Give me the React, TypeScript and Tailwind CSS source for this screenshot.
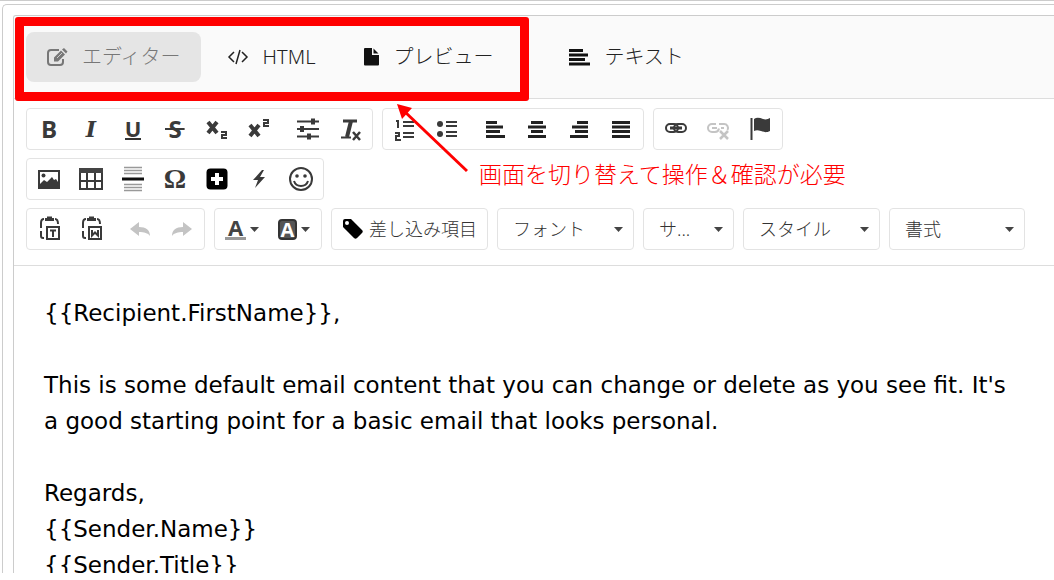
import type { ReactNode } from "react"

const jp = "font-['Noto_Sans','Noto_Sans_CJK_JP',sans-serif]"

function Tab({ icon, label, active, className = "" }: { icon: ReactNode; label: string; active?: boolean; className?: string }) {
  return (
    <button
      type="button"
      aria-pressed={!!active}
      className={`flex h-[50px] shrink-0 items-center gap-[14px] rounded-lg px-5 text-xl font-light whitespace-nowrap ${
        active ? "bg-[#e5e5e5] text-[#777]" : "text-[#222]"
      } ${className}`}
    >
      {icon}
      {label}
    </button>
  )
}

function Group({ children }: { children: ReactNode }) {
  return <div className="flex h-[42px] shrink-0 items-center rounded-[4px] border border-[#e3e3e3] px-px">{children}</div>
}

function Tool({ label, disabled, children }: { label: string; disabled?: boolean; children: ReactNode }) {
  return (
    <button
      type="button"
      title={label}
      aria-label={label}
      disabled={disabled}
      className="flex h-10 w-[42px] shrink-0 items-center justify-center text-[#3a3a3a] disabled:text-[#c4c4c4]"
    >
      {children}
    </button>
  )
}

function Svg({ children }: { children: ReactNode }) {
  return (
    <svg width="26" height="26" viewBox="0 0 26 26" fill="none" stroke="currentColor" strokeWidth="2" className="overflow-visible">
      {children}
    </svg>
  )
}

function Caret() {
  return (
    <svg width="9" height="5" viewBox="0 0 9 5" className="shrink-0 fill-[#444]">
      <path d="M0 0h9L4.500 5z" />
    </svg>
  )
}

function Combo({ label, text, className }: { label: string; text: string; className: string }) {
  return (
    <label className={`flex h-[42px] shrink-0 items-center rounded-[4px] border border-[#e3e3e3] pr-[10px] pl-[15px] ${className}`}>
      <select aria-label={label} className="min-w-0 flex-1 appearance-none bg-transparent text-lg leading-6 font-light text-[#333]">
        <option>{text}</option>
      </select>
      <Caret />
    </label>
  )
}

function Lines({ d }: { d: string }) {
  return (
    <Svg>
      <path d={d} stroke="#222" strokeWidth="3" />
    </Svg>
  )
}

function Tabs() {
  return (
    <div className="flex items-center border-b border-[#ddd] bg-[#fafafa] py-4 pl-3">
      <Tab
        active
        label="エディター"
        icon={
          <svg width="22" height="20" viewBox="0 0 22 20" fill="none" stroke="currentColor" strokeWidth="2">
            <path d="M13 3H5a3 3 0 0 0-3 3v9a3 3 0 0 0 3 3h9a3 3 0 0 0 3-3v-3" />
            <path d="M8 10.500l7-7 4 4-7 7H8zM16 2.500L18 1l3.500 3.500L20 6.500z" fill="currentColor" stroke="none" />
            <path d="M11 11l5-5" stroke="#ccc" strokeWidth="1" />
          </svg>
        }
      />
      <Tab
        label="HTML"
        className="ml-[6px]"
        icon={
          <svg width="22" height="16" viewBox="0 0 22 16" fill="none" stroke="currentColor" strokeWidth="1.500">
            <path d="M7 3L2 8l5 5M15 3l5 5-5 5M13 1L9 15" />
          </svg>
        }
      />
      <Tab
        label="プレビュー"
        className="ml-[9px]"
        icon={
          <svg width="15" height="18" viewBox="0 0 15 18" fill="#111">
            <path d="M1 0h7v7h7v9.500a1 1 0 0 1-1 1H1a1 1 0 0 1-1-1V1a1 1 0 0 1 1-1zM9.500 0.500l5 5h-5z" />
          </svg>
        }
      />
      <Tab
        label="テキスト"
        className="ml-9"
        icon={
          <svg width="21" height="18" viewBox="0 0 21 18" stroke="#111" strokeWidth="3">
            <path d="M0 2.500h14M0 7h19M0 11.500h16M0 16h21" />
          </svg>
        }
      />
    </div>
  )
}

function Toolbar() {
  return (
    <div className="flex flex-col gap-2 border-b border-[#ddd] pt-[9px] pb-[15px] pl-3">
      <div className="flex gap-[9px]">
        <Group>
          <Tool label="太字">
            <span className="font-['Open_Sans',sans-serif] text-2xl font-bold">B</span>
          </Tool>
          <Tool label="斜体">
            <span className="font-['DejaVu_Serif',serif] text-[22px] font-bold italic">I</span>
          </Tool>
          <Tool label="下線">
            <span className="border-b-2 border-[#333] font-['Open_Sans',sans-serif] text-[22px] leading-[19px] font-bold">U</span>
          </Tool>
          <Tool label="打ち消し線">
            <span className="bg-[linear-gradient(currentColor,currentColor)] bg-[length:100%_2px] bg-center bg-no-repeat px-[3px] font-['Open_Sans',sans-serif] text-2xl font-bold">
              S
            </span>
          </Tool>
          <Tool label="下付き">
            <Svg>
              <path d="M4 6l9 11M13 6L4 17" strokeWidth="4" />
              <path d="M17 16h5v3h-4v3h5" />
            </Svg>
          </Tool>
          <Tool label="上付き">
            <Svg>
              <path d="M4 9l9 11M13 9L4 20" strokeWidth="4" />
              <path d="M17 4h5v3h-4v3h5" />
            </Svg>
          </Tool>
          <span className="w-[7px]" />
          <Tool label="書式のコピー">
            <Svg>
              <path d="M2 5.500h22M2 13h22M2 20.500h22" />
              <path d="M18 2.500v6M7 10v6M14 17.500v6" strokeWidth="4" />
            </Svg>
          </Tool>
          <Tool label="書式を解除">
            <Svg>
              <path d="M6 5h14" strokeWidth="3" />
              <path d="M14 5l-4 16" strokeWidth="4" />
              <path d="M4 21.500h10" />
              <path d="M16 16l7 8M23 16l-7 8" strokeWidth="2.500" />
            </Svg>
          </Tool>
        </Group>
        <Group>
          <Tool label="番号付きリスト">
            <Svg>
              <path d="M11 6h11M11 10h11M11 17h11M11 21h11" strokeWidth="2" />
              <path d="M4 5h2v7M3 17h4v3H4v4h5" />
            </Svg>
          </Tool>
          <Tool label="箇条書き">
            <Svg>
              <circle cx="6" cy="8" r="3" fill="currentColor" stroke="none" />
              <circle cx="6" cy="18" r="3" fill="currentColor" stroke="none" />
              <path d="M12 6h11M12 10h11M12 16h11M12 20h11" />
            </Svg>
          </Tool>
          <span className="w-[6px]" />
          <Tool label="左揃え">
            <Lines d="M4 6.500h11M4 11h17M4 15.500h14M4 20.500h19" />
          </Tool>
          <Tool label="中央揃え">
            <Lines d="M7 6.500h12M4 11h18M7 15.500h12M4 20.500h18" />
          </Tool>
          <Tool label="右揃え">
            <Lines d="M11 6.500h11M6 11h16M9 15.500h13M4 20.500h18" />
          </Tool>
          <Tool label="両端揃え">
            <Lines d="M4 6.500h18M4 11h18M4 15.500h18M4 20.500h18" />
          </Tool>
        </Group>
        <Group>
          <Tool label="リンク">
            <Svg>
              <rect x="3" y="8" width="12" height="8" rx="4" />
              <rect x="11" y="8" width="12" height="8" rx="4" />
              <path d="M7 12h12" strokeWidth="3" />
            </Svg>
          </Tool>
          <Tool label="リンクを解除" disabled>
            <Svg>
              <path d="M14 12.500A4.250 4.250 0 0 1 10 16H7a4 4 0 0 1 0-8h4M14 8h5a4 4 0 0 1 3.500 6M7 12h5M16 12h3" />
              <path d="M15 15l8 8M23 15l-8 8" strokeWidth="2.500" />
            </Svg>
          </Tool>
          <Tool label="アンカー">
            <Svg>
              <path d="M4.500 2v22" />
              <path d="M7 3c3-2 6-1 9 0s5 0 7-1v13c-4 2-6 1-9 0s-5-1-7 0z" fill="currentColor" stroke="none" />
            </Svg>
          </Tool>
        </Group>
      </div>

      <div className="flex gap-[9px]">
        <Group>
          <Tool label="画像">
            <Svg>
              <rect x="3" y="5" width="20" height="17" />
              <circle cx="7.500" cy="9.500" r="2" fill="currentColor" stroke="none" />
              <path d="M4 21v-3l4-4 3 2 5-5 2 3 2-1 2 3v5z" fill="currentColor" stroke="none" />
            </Svg>
          </Tool>
          <Tool label="表">
            <Svg>
              <path d="M1 4.500h24" stroke="#444" strokeWidth="5" />
              <path d="M2 7v16h22V7M2 15h22M9 7v15M17 7v15" />
            </Svg>
          </Tool>
          <Tool label="水平線">
            <Svg>
              <path d="M4 1.500h18M4 4.500h18M4 7.500h18M4 18.500h18M4 21.500h18M4 24.500h18" stroke="#999" strokeWidth="1.500" />
              <path d="M2 13h22" stroke="#111" strokeWidth="3" />
            </Svg>
          </Tool>
          <Tool label="特殊文字">
            <span className="font-['Liberation_Serif',serif] text-[28px] leading-8 font-bold">Ω</span>
          </Tool>
          <Tool label="追加">
            <Svg>
              <rect x="2.500" y="2.500" width="21" height="21" rx="4" fill="#000" stroke="none" />
              <path d="M13 7v12M7 13h12" stroke="#fff" strokeWidth="4" />
            </Svg>
          </Tool>
          <Tool label="アクション">
            <Svg>
              <path d="M16 4L7 14h5l-3 8 10-11h-5l4-7z" fill="currentColor" stroke="none" />
            </Svg>
          </Tool>
          <Tool label="絵文字">
            <Svg>
              <circle cx="13" cy="13" r="11" />
              <path d="M6 15c2 6.500 12 6.500 14 0" />
              <circle cx="9" cy="10" r="1.800" fill="currentColor" stroke="none" />
              <circle cx="17" cy="10" r="1.800" fill="currentColor" stroke="none" />
            </Svg>
          </Tool>
        </Group>
      </div>

      <div className="flex gap-[9px]">
        <Group>
          <Tool label="テキストとして貼り付け">
            <Svg>
              <path d="M8 22H7a2 2 0 0 1-2-2v-5M5 12V7q0-4 3-4M19 3q3 0 3 5" />
              <path d="M9 3.500h9M11 2h5" strokeWidth="3" />
              <rect x="11" y="11" width="12" height="12" />
              <path d="M14 14.500h6M17 14v7" />
            </Svg>
          </Tool>
          <Tool label="Wordから貼り付け">
            <Svg>
              <path d="M8 22H7a2 2 0 0 1-2-2v-5M5 12V7q0-4 3-4M19 3q3 0 3 5" />
              <path d="M9 3.500h9M11 2h5" strokeWidth="3" />
              <rect x="11" y="11" width="12" height="12" />
              <path d="M14 14v5.500l3-3 3 3V14" />
            </Svg>
          </Tool>
          <span className="w-[7px]" />
          <Tool label="元に戻す" disabled>
            <Svg>
              <path d="M3 13l9-7v5c7 0 11 3 11 9-2-3-6-4-11-4v4z" fill="currentColor" stroke="none" />
            </Svg>
          </Tool>
          <Tool label="やり直す" disabled>
            <Svg>
              <path d="M23 13l-9-7v5c-7 0-11 3-11 9 2-3 6-4 11-4v4z" fill="currentColor" stroke="none" />
            </Svg>
          </Tool>
        </Group>
        <Group>
          <button type="button" aria-label="文字色" className="flex h-10 w-[52px] items-center justify-center gap-1 text-[#444]">
            <span className="border-b-3 border-[#999] px-[3px] font-['Open_Sans',sans-serif] text-[22px] leading-[19px] font-bold">A</span>
            <Caret />
          </button>
          <button type="button" aria-label="背景色" className="flex h-10 w-[52px] items-center justify-center gap-1">
            <span className="rounded-[4px] border-2 border-[#333] bg-[#555] px-px font-['Open_Sans',sans-serif] text-xl leading-[17px] font-bold text-white">A</span>
            <Caret />
          </button>
        </Group>
        <Group>
          <button type="button" className="flex h-10 items-center gap-[5px] px-[9px] text-lg leading-6 font-light whitespace-nowrap text-[#333]">
            <svg width="22" height="22" viewBox="0 0 22 22" fill="#000">
              <path fillRule="evenodd" d="M3 1h6l11 11c1 1 1 2 0 3l-5 5c-1 1-2 1-3 0L1 9V3q0-2 2-2zM5 3a2 2 0 1 0 0 4 2 2 0 0 0 0-4z" />
            </svg>
            差し込み項目
          </button>
        </Group>
        <Combo label="フォント" text="フォント" className="w-[137px]" />
        <Combo label="サイズ" text="サ..." className="w-[91px]" />
        <Combo label="スタイル" text="スタイル" className="w-[137px]" />
        <Combo label="書式" text="書式" className="w-[136px]" />
      </div>
    </div>
  )
}

function Annotation() {
  return (
    <div className="pointer-events-none">
      <div className="absolute top-[16px] left-[15px] h-[84px] w-[514px] rounded-[3px] border-9 border-[#f00]" />
      <svg width="72" height="70" viewBox="0 0 72 70" className="absolute top-[102px] left-[396px]">
        <path d="M8 8l63 60" stroke="#f00" strokeWidth="3" />
        <path d="M1 1l15 4-10 11z" fill="#f00" />
      </svg>
      <p className="absolute top-[156px] left-[479px] text-[23px] leading-[34px] font-light whitespace-nowrap text-[#f00]">
        画面を切り替えて操作＆確認が必要
      </p>
    </div>
  )
}

export default function App() {
  return (
    <div className={`relative flex h-screen flex-col overflow-hidden border-t border-[#ccc] bg-white pb-[7px] ${jp}`}>
      <div className="mt-[3px] ml-[2px] flex min-h-0 flex-1 flex-col overflow-hidden rounded-tl-[5px] border-t border-l border-[#ccc] pt-[10px] pl-[10px]">
        <div className="flex min-h-0 flex-1 flex-col overflow-hidden rounded-tl-[3px] border-t border-l border-[#ccc]">
          <Tabs />
          <Toolbar />
          <div
            role="textbox"
            aria-label="本文"
            contentEditable
            suppressContentEditableWarning
            spellCheck={false}
            className="flex flex-col gap-9 px-[30px] pt-[29px] font-['DejaVu_Sans',sans-serif] text-[23px] leading-9 text-black"
          >
            <p>{"{{Recipient.FirstName}},"}</p>
            <p>
              This is some default email content that you can change or delete as you see fit. It's a good starting point
              for a basic email that looks personal.
            </p>
            <p>
              Regards,
              <br />
              {"{{Sender.Name}}"}
              <br />
              {"{{Sender.Title}}"}
            </p>
          </div>
        </div>
      </div>
      <Annotation />
    </div>
  )
}
